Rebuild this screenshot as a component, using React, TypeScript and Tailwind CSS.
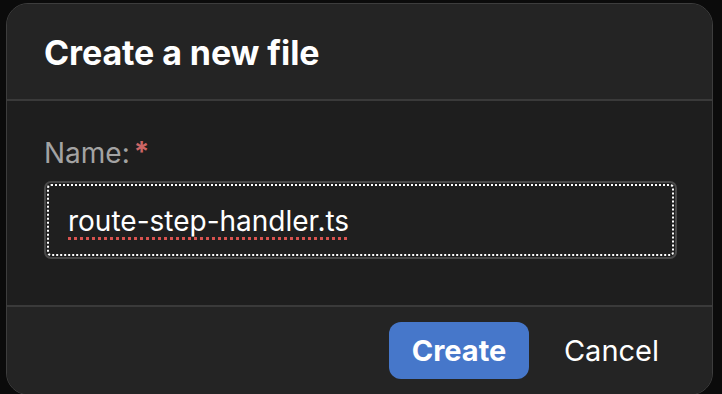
export default function App() {
  return (
    <div className="h-[394px] w-[722px] overflow-hidden bg-[#0b0b0b] pl-[6px] pt-[3px] font-['Inter','Liberation_Sans',sans-serif]">
      <div className="flex h-[392px] w-[707px] flex-col overflow-hidden rounded-[22px] border border-[#3d3d3d] bg-[#1e1e1e]">
        <div className="flex h-[97px] shrink-0 items-center border-b-2 border-[#3a3a3a] bg-[#242424] px-[37px]">
          <h1 className="pt-[2px] text-[34px] font-bold leading-none tracking-[-0.1px] text-white">Create a new file</h1>
        </div>

        <div className="flex h-[204px] shrink-0 flex-col pl-[37px] pr-[35px] pt-[36px]">
          <label className="flex items-start text-[28px] leading-[32px] text-[#a3a3a3]">
            Name:
            <span className="ml-[4px] text-[28px] font-bold leading-[30px] text-[#cc6666]">*</span>
          </label>
          <div className="mt-[12px] flex h-[78px] items-center rounded-[7px] border-2 border-[#4a4a4a] bg-[#1f1f1f] px-[22px] outline-2 outline-offset-[-5px] outline-dotted outline-white">
            <span className="pt-[2px] text-[28px] leading-none text-white underline decoration-[#d9534f] decoration-dotted decoration-[3px] underline-offset-[6px]">
              route-step-handler.ts
            </span>
          </div>
        </div>

        <div className="flex flex-1 items-center justify-end gap-[18px] border-t-2 border-[#3a3a3a] bg-[#242424] pr-[36px]">
          <button
            type="button"
            className="h-[57px] w-[140px] rounded-[12px] bg-[#4677ca] text-[29px] font-bold text-white"
          >
            Create
          </button>
          <button type="button" className="h-[57px] w-[129px] rounded-[12px] text-[29px] text-white">
            Cancel
          </button>
        </div>
      </div>
    </div>
  )
}
